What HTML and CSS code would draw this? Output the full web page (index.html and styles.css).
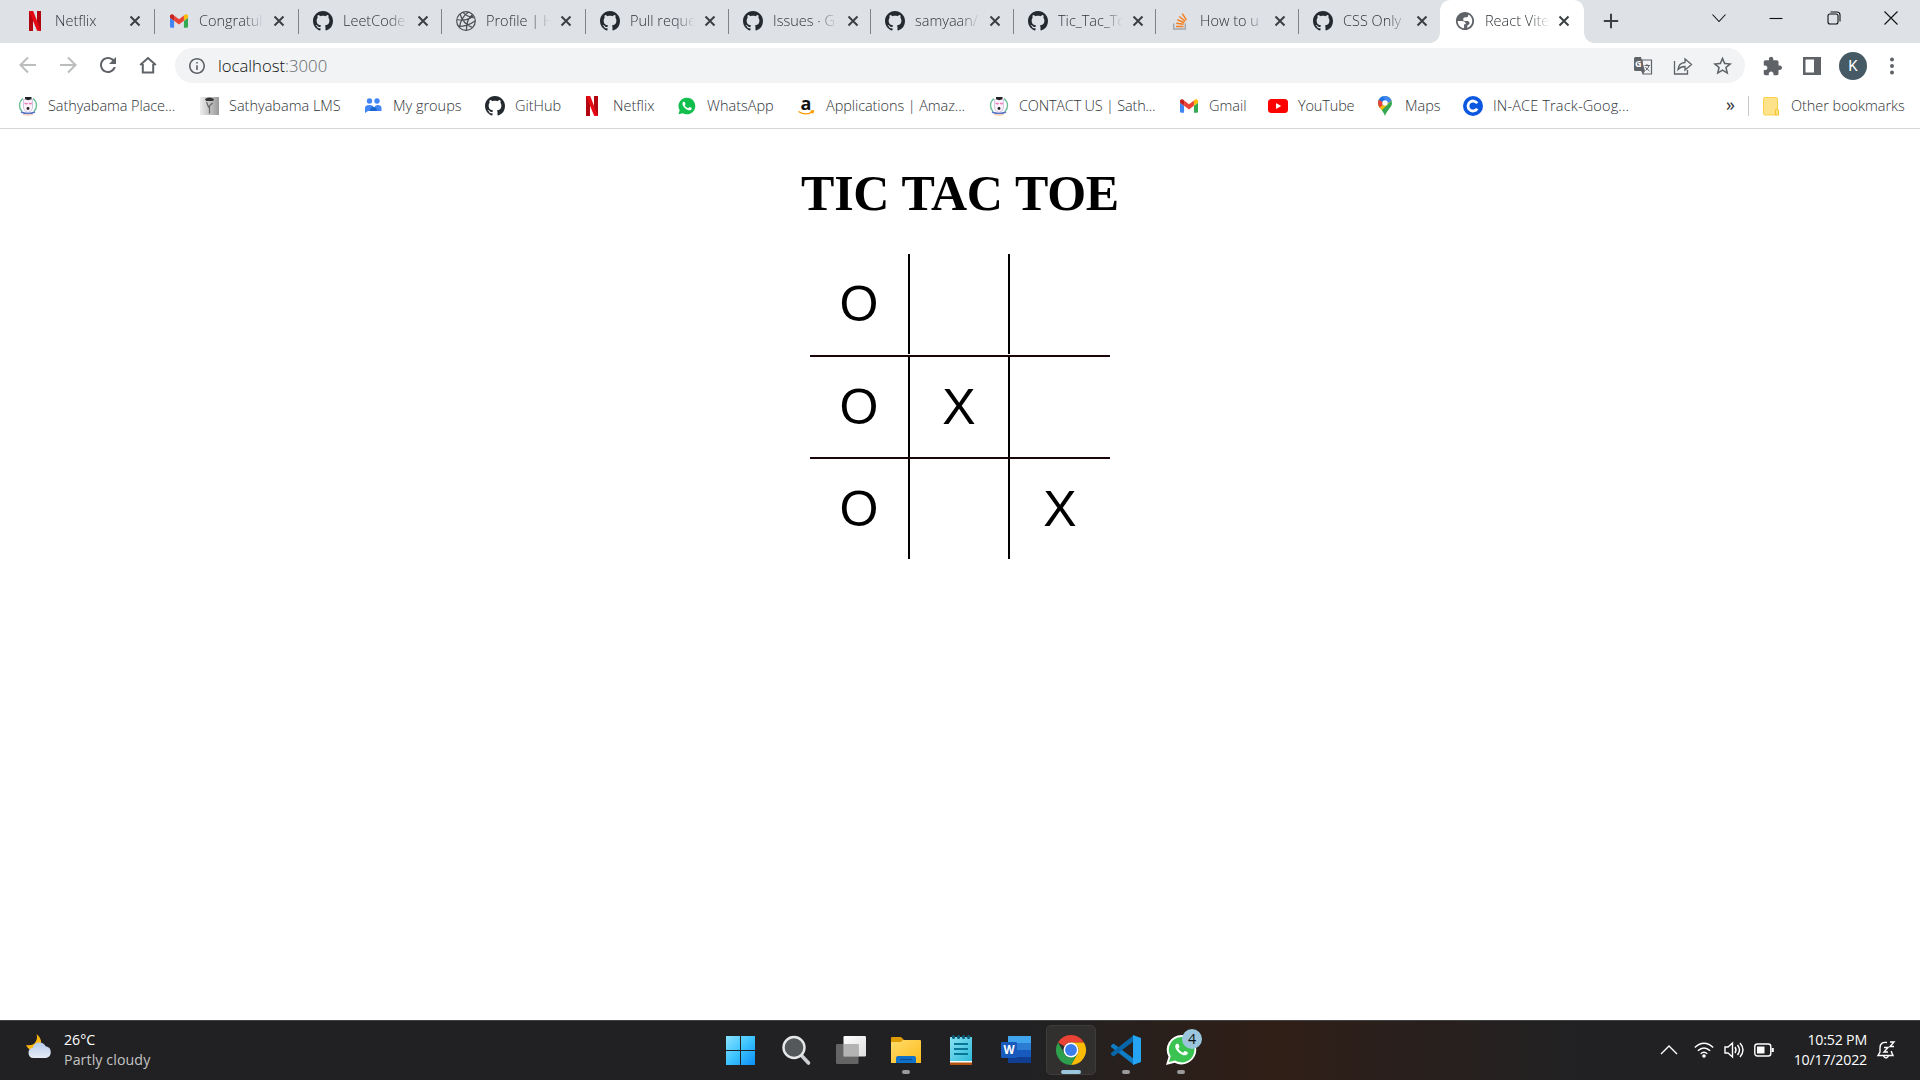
FILE: index.html
```html
<!DOCTYPE html>
<html lang="en">
<head>
<meta charset="utf-8">
<title>React Vite</title>
<link rel="stylesheet" href="styles.css">
</head>
<body>
<svg class="sprite" aria-hidden="true">
  <symbol id="github" viewBox="0 0 16 16"><path fill="#24292f" d="M8 0C3.58 0 0 3.58 0 8c0 3.54 2.29 6.53 5.47 7.59.4.07.55-.17.55-.38 0-.19-.01-.82-.01-1.49-2.01.37-2.53-.49-2.69-.94-.09-.23-.48-.94-.82-1.13-.28-.15-.68-.52-.01-.53.63-.01 1.08.58 1.23.82.72 1.21 1.87.87 2.33.66.07-.52.28-.87.51-1.07-1.78-.2-3.64-.89-3.64-3.95 0-.87.31-1.59.82-2.15-.08-.2-.36-1.02.08-2.12 0 0 .67-.21 2.2.82.64-.18 1.32-.27 2-.27s1.36.09 2 .27c1.53-1.04 2.2-.82 2.2-.82.44 1.1.16 1.92.08 2.12.51.56.82 1.27.82 2.15 0 3.07-1.87 3.75-3.65 3.95.29.25.54.73.54 1.48 0 1.07-.01 1.93-.01 2.2 0 .21.15.46.55.38A8.01 8.01 0 0 0 16 8c0-4.42-3.58-8-8-8z"/></symbol>
  <symbol id="netflix" viewBox="0 0 20 20"><path fill="#b20710" d="M3 0h4v20l-4 .2zM11 0h4v20l-4-.4z"/><path fill="#e50914" d="M3 0h4.2L15 20l-4-.4z"/></symbol>
  <symbol id="gmail" viewBox="52 42 88 66"><path fill="#4285f4" d="M58 108h14V74L52 59v43c0 3.32 2.69 6 6 6"/><path fill="#34a853" d="M120 108h14c3.32 0 6-2.69 6-6V59l-20 15"/><path fill="#fbbc04" d="M120 48v26l20-15v-8c0-7.42-8.47-11.65-14.4-7.2"/><path fill="#ea4335" d="M72 74V48l24 18 24-18v26L96 92"/><path fill="#c5221f" d="M52 51v8l20 15V48l-5.6-4.2c-5.94-4.45-14.4-.22-14.4 7.2"/></symbol>
  <symbol id="crest" viewBox="0 0 20 20"><path d="M5 2.500C.5 6 .5 12 4 15.500M15 2.500c4.500 3.500 4.500 9.500 1 13" fill="none" stroke="#6cbd97" stroke-width="1.400"/><path d="M5.500 3.500h9v8.500q0 3-4.500 4.500-4.500-1.500-4.500-4.500z" fill="#faf1fa" stroke="#c3bddb" stroke-width=".8"/><path d="M7 1h6.500v2l-3.300 1.200L7 3z" fill="#222"/><path d="M6.500 7l2 1 1-1M11 7l1.500 1 1.500-1" fill="none" stroke="#f27ab8" stroke-width="1.200"/><circle cx="10" cy="12.500" r="1.400" fill="#222"/><path d="M3 16q7 3 14 0" fill="none" stroke="#5572c4" stroke-width="1.400"/><path d="M5 18.500q5 1.500 10 0" fill="none" stroke="#f6c49a"/></symbol>
  <symbol id="phone" viewBox="0 0 24 24"><path fill="#fff" d="M17.472 14.382c-.297-.149-1.758-.867-2.03-.967-.273-.099-.471-.148-.67.15-.197.297-.767.966-.94 1.164-.173.199-.347.223-.644.075-.297-.15-1.255-.463-2.39-1.475-.883-.788-1.48-1.761-1.653-2.059-.173-.297-.018-.458.13-.606.134-.133.298-.347.446-.52.149-.174.198-.298.298-.497.099-.198.05-.371-.025-.52-.075-.149-.669-1.612-.916-2.207-.242-.579-.487-.5-.669-.51-.173-.008-.371-.01-.57-.01-.198 0-.52.074-.792.372-.272.297-1.04 1.016-1.04 2.479 0 1.462 1.065 2.875 1.213 3.074.149.198 2.096 3.2 5.077 4.487.709.306 1.262.489 1.694.625.712.227 1.36.195 1.871.118.571-.085 1.758-.719 2.006-1.413.248-.694.248-1.289.173-1.413-.074-.124-.272-.198-.57-.347"/></symbol>
  <symbol id="close" viewBox="0 0 12 12"><path d="M1.500 1.500l9 9M10.500 1.500l-9 9" stroke="#3c4043" stroke-width="2" fill="none"/></symbol>
</svg>

<header class="browser">
  <div class="tabstrip">
    <div class="tab tab-first"><svg class="fav"><use href="#netflix"/></svg><span class="tab-title">Netflix</span><svg class="tab-close"><use href="#close"/></svg></div>
    <div class="tab tab-wide"><svg class="fav fav-gmail"><use href="#gmail"/></svg><span class="tab-title">Congratul</span><svg class="tab-close"><use href="#close"/></svg></div>
    <div class="tab"><svg class="fav"><use href="#github"/></svg><span class="tab-title">LeetCode-</span><svg class="tab-close"><use href="#close"/></svg></div>
    <div class="tab tab-wide"><svg class="fav" viewBox="0 0 20 20" fill="none" stroke="#4a4d51" stroke-width="1.200"><circle cx="10" cy="10" r="9.300"/><path d="M12.500 1Q4.500 7 3.500 16.500M16.500 3.500Q10 9 10.500 19M4 3q3 10 12.500 13.500M1 8.500q9 2.500 16-3.500M2.500 15.500q9 0 16.500-5.500M7 1.400Q11 6 18.500 7"/></svg><span class="tab-title">Profile | H</span><svg class="tab-close"><use href="#close"/></svg></div>
    <div class="tab"><svg class="fav"><use href="#github"/></svg><span class="tab-title">Pull reque</span><svg class="tab-close"><use href="#close"/></svg></div>
    <div class="tab tab-narrow"><svg class="fav"><use href="#github"/></svg><span class="tab-title">Issues · G</span><svg class="tab-close"><use href="#close"/></svg></div>
    <div class="tab"><svg class="fav"><use href="#github"/></svg><span class="tab-title">samyaan/</span><svg class="tab-close"><use href="#close"/></svg></div>
    <div class="tab tab-narrow"><svg class="fav"><use href="#github"/></svg><span class="tab-title">Tic_Tac_To</span><svg class="tab-close"><use href="#close"/></svg></div>
    <div class="tab"><svg class="fav" viewBox="0 0 20 20" fill="none"><path d="M3.700 12.500V18h11.600v-5.500" stroke="#a5a8ab" stroke-width="1.500"/><path d="M6 15.500h7.500M6.200 12.300l7.400 1M7.300 8.700l7 3M9.300 5.500l6 4.800M12.300 2.700l4.200 6.500" stroke="#f48024" stroke-width="1.500"/></svg><span class="tab-title">How to u</span><svg class="tab-close"><use href="#close"/></svg></div>
    <div class="tab tab-last"><svg class="fav"><use href="#github"/></svg><span class="tab-title">CSS Only</span><svg class="tab-close"><use href="#close"/></svg></div>
    <div class="tab tab-active"><svg class="fav" viewBox="1 1 22 22" fill="#5f6368"><path d="M12 2C6.480 2 2 6.480 2 12s4.480 10 10 10 10-4.480 10-10S17.520 2 12 2zM4 12h4.500c3 0 4.500 1.500 4.500 3.500h-2v4.400C7 19.500 4 16.500 4 12zm10.500 7.600v-2c0-1.500 2.500-1 2.500-3s-1.500-2.600-3-2.600h-2c-1.500 0-2-1-2-2s1-2 2.500-2H14c1 0 1.500-1 1.500-2.200V4.900C18.200 6.200 20 8.900 20 12c0 3.500-2.300 6.500-5.500 7.600z"/></svg><span class="tab-title">React Vite</span><svg class="tab-close"><use href="#close"/></svg></div>
    <svg class="new-tab" viewBox="0 0 16 16"><path d="M8 .8v14.400M.8 8h14.400" stroke="#3c4043" stroke-width="2"/></svg>
    <div class="window-controls">
      <svg viewBox="0 0 14 14"><path d="M.5 3.500l6.500 7 6.500-7"/></svg>
      <svg viewBox="0 0 14 14"><path d="M.5 7.500h13"/></svg>
      <svg viewBox="0 0 14 14"><rect x="1" y="3" width="10" height="10" rx="2"/><path d="M3.500 1H10q3 0 3 3v6.500"/></svg>
      <svg viewBox="0 0 14 14"><path d="M.5 .5l13 13M13.500 .5l-13 13"/></svg>
    </div>
  </div>

  <div class="toolbar">
    <svg class="nav off" viewBox="0 0 20 20"><path d="M18 10H3M10 2.500L2.500 10l7.500 7.500"/></svg>
    <svg class="nav off" viewBox="0 0 20 20"><path d="M2 10h15M10 2.500l7.500 7.500-7.500 7.500"/></svg>
    <svg class="nav solid" viewBox="2 2 20 20"><path d="M17.650 6.350C16.200 4.900 14.210 4 12 4c-4.420 0-7.990 3.580-7.990 8s3.570 8 7.990 8c3.730 0 6.840-2.550 7.730-6h-2.080c-.82 2.330-3.040 4-5.650 4-3.310 0-6-2.690-6-6s2.690-6 6-6c1.660 0 3.140.69 4.220 1.780L13 11h7V4l-2.350 2.350z"/></svg>
    <svg class="nav" viewBox="0 0 20 20"><path d="M2.200 10L10 3l7.800 7M4.800 9v8.500h10.400V9"/></svg>
    <div class="omnibox">
      <svg class="info" viewBox="2 2 20 20"><path d="M11 7h2v2h-2zm0 4h2v6h-2zm1-9C6.480 2 2 6.480 2 12s4.480 10 10 10 10-4.480 10-10S17.520 2 12 2zm0 18c-4.410 0-8-3.590-8-8s3.590-8 8-8 8 3.590 8 8-3.590 8-8 8z"/></svg>
      <span class="url">localhost<span class="port">:3000</span></span>
      <div class="omni-actions">
        <svg viewBox="0 0 20 20"><path d="M9 4h9.500v14H10z" fill="none" stroke="#5f6368" stroke-width="1.200"/><path fill="#5f6368" d="M2.500 1H8l4 14H2.500Q1 15 1 13.500v-11Q1 1 2.500 1z"/><text x="2" y="11" class="g-letter">G</text><path d="M11.500 9.500H17M14 8v1.500M16 9.500q-.5 3-3.500 5M12.500 11q1.500 2.500 4 4" fill="none" stroke="#5f6368"/><path fill="#5f6368" d="M8 15h4l-2 3z"/></svg>
        <svg viewBox="0 0 20 20" fill="none" stroke="#5f6368" stroke-width="1.300"><path d="M1.500 5v13h13v-4"/><path d="M5 13.500q.5-6.500 7-7V3l6.500 5.500-6.500 5.500v-3.500q-4.500 0-7 3z"/></svg>
        <svg viewBox="2 2 20 20"><path fill="#5f6368" d="M22 9.240l-7.190-.62L12 2 9.190 8.630 2 9.240l5.460 4.730L5.820 21 12 17.270 18.180 21l-1.630-7.030L22 9.240zM12 15.400l-3.760 2.270 1-4.280-3.320-2.880 4.380-.38L12 6.100l1.710 4.040 4.380.38-3.320 2.880 1 4.280L12 15.400z"/></svg>
      </div>
    </div>
    <div class="extensions">
      <svg viewBox="0 0 23 23"><path fill="#5f6368" d="M20.500 11H19V7c0-1.100-.9-2-2-2h-4V3.500C13 2.120 11.880 1 10.500 1S8 2.120 8 3.500V5H4c-1.100 0-1.990.9-1.990 2v3.800H3.500c1.490 0 2.700 1.210 2.700 2.700s-1.210 2.700-2.700 2.700H2V20c0 1.100.9 2 2 2h3.800v-1.500c0-1.490 1.210-2.700 2.700-2.700s2.700 1.210 2.700 2.700V22H17c1.100 0 2-.9 2-2v-4h1.500c1.380 0 2.500-1.120 2.500-2.500S21.880 11 20.500 11z"/></svg>
      <svg viewBox="0 0 20 20"><path fill="#5f6368" fill-rule="evenodd" d="M1 1h18v18H1zM3.500 3.500v13H12v-13z"/></svg>
      <span class="avatar">K</span>
      <svg viewBox="0 0 20 20" fill="#5f6368"><circle cx="10" cy="3.500" r="2"/><circle cx="10" cy="10" r="2"/><circle cx="10" cy="16.500" r="2"/></svg>
    </div>
  </div>

  <nav class="bookmarks">
    <a class="bm bm-place"><svg><use href="#crest"/></svg><span>Sathyabama Place...</span></a>
    <a class="bm bm-lms"><svg viewBox="0 0 20 20"><defs><linearGradient id="lms"><stop stop-color="#eee"/><stop offset="1" stop-color="#999"/></linearGradient></defs><path fill="url(#lms)" d="M1 1h19v18H1z"/><path fill="#333" d="M6 3q4-3 9 0l-1 2H7z"/><path d="M7.500 6l2 5 4-4M10.500 10v7.500" stroke="#666" stroke-width="1.200" fill="none"/></svg><span>Sathyabama LMS</span></a>
    <a class="bm bm-groups"><svg viewBox="0 0 20 20" fill="#4285f4"><circle cx="6.500" cy="5" r="2.700"/><circle cx="14" cy="5" r="2.700"/><path d="M2 17v-5q0-3 4.500-3t4 3v3H5zM11.500 15v-4q1-2 3-2 4 0 4 3v3z"/><path fill="#1967d2" d="M7 15q0-4 3.500-4t3.500 4z"/></svg><span>My groups</span></a>
    <a class="bm bm-github"><svg><use href="#github"/></svg><span>GitHub</span></a>
    <a class="bm bm-netflix"><svg><use href="#netflix"/></svg><span>Netflix</span></a>
    <a class="bm bm-whatsapp"><svg viewBox="0 0 24 24"><path fill="#12bf4c" d="M12 2a10 10 0 1 1-5 18.700L1.800 22l1.400-5A10 10 0 0 1 12 2z"/><use href="#phone" x="1" y="1" width="22" height="22"/></svg><span>WhatsApp</span></a>
    <a class="bm bm-amazon"><svg viewBox="0 0 20 20"><text x="4.500" y="14" class="a-letter">a</text><path d="M2.500 15.500q7 4.500 14 .5M14.500 15h3l-1 2.500" fill="none" stroke="#f90" stroke-width="1.400"/></svg><span>Applications | Amaz...</span></a>
    <a class="bm bm-contact"><svg><use href="#crest"/></svg><span>CONTACT US | Sath...</span></a>
    <a class="bm bm-gmail"><svg><use href="#gmail" x="1" y="1" width="18" height="18"/></svg><span>Gmail</span></a>
    <a class="bm bm-youtube"><svg viewBox="0 0 20 20"><rect y="3" width="20" height="14" rx="3.500" fill="#f00"/><path fill="#fff" d="M8 7l5.200 3L8 13z"/></svg><span>YouTube</span></a>
    <a class="bm bm-maps"><svg viewBox="0 0 20 20"><clipPath id="pin"><path d="M10 0a7 7 0 0 1 7 7c0 4.500-4.500 6-7 13-2.500-7-7-8.500-7-13a7 7 0 0 1 7-7z"/></clipPath><g clip-path="url(#pin)"><path fill="#34a853" d="M0 0h20v20H0z"/><path fill="#fbbc04" d="M3 12L15 1l2 3-11 11z"/><path fill="#4285f4" d="M5 0h13v4L8 10z"/><path fill="#1a73e8" d="M0 0h7l4 5-5 5z"/><path fill="#ea4335" d="M3 3l6 4-5 6-2-4z"/></g><circle cx="10" cy="7" r="2.700" fill="#fff"/></svg><span>Maps</span></a>
    <a class="bm bm-inace"><svg viewBox="0 0 20 20"><circle cx="10" cy="10" r="10" fill="#0b57e0"/><path d="M14.200 7.300a5 5 0 1 0 0 5.400" fill="none" stroke="#fff" stroke-width="2.800"/></svg><span>IN-ACE Track-Goog...</span></a>
    <span class="overflow">»</span>
    <a class="bm bm-other"><svg viewBox="0 0 20 20"><rect x="2.500" y="1.500" width="14" height="17.500" rx="1.500" fill="#ffe38a" stroke="#fbd04f"/><path d="M14.500 19v-4q0-2 1.500-2t1.500 2v4z" fill="#ffe38a" stroke="#f3c22f"/></svg><span>Other bookmarks</span></a>
  </nav>
</header>

<main class="game">
  <h1>TIC TAC TOE</h1>
  <div class="board">
    <div class="row row-first"><div class="cell">O</div><div class="cell"></div><div class="cell"></div></div>
    <div class="row"><div class="cell">O</div><div class="cell">X</div><div class="cell"></div></div>
    <div class="row"><div class="cell">O</div><div class="cell"></div><div class="cell">X</div></div>
  </div>
</main>

<footer class="taskbar">
  <div class="weather">
    <svg viewBox="0 0 28 28"><defs><linearGradient id="cloud" x2="0" y2="1"><stop stop-color="#b5caeb"/><stop offset="1" stop-color="#e6ecf5"/></linearGradient></defs><path fill="#fbb612" d="M11.500 0q5 4 4.500 9t-5 7Q4 18 1 11q7 1 9.500-3t1-8z"/><path fill="url(#cloud)" d="M8.500 24a5.200 5.200 0 0 1-.8-10.300 7 7 0 0 1 13-1.500A6 6 0 0 1 21 24z"/></svg>
    <div class="weather-text"><span>26°C</span><span class="sub">Partly cloudy</span></div>
  </div>
  <div class="apps">
    <div class="app"><svg viewBox="0 0 30 30"><defs><linearGradient id="win" x2="1" y2="1"><stop stop-color="#8be3ff"/><stop offset=".5" stop-color="#3cc3ff"/><stop offset="1" stop-color="#0a8ff5"/></linearGradient></defs><path fill="url(#win)" d="M0 1h14v14H0zM15 1h14v14H15zM0 16h14v14H0zM15 16h14v14H15z"/></svg></div>
    <div class="app"><svg viewBox="0 0 30 30"><path d="M20.500 20.500l7 7.500" stroke="#ccd0d4" stroke-width="3.600" stroke-linecap="round"/><circle cx="13" cy="12.500" r="10.500" fill="#55585a" stroke="#e5e7e8" stroke-width="2.400"/></svg></div>
    <div class="app"><svg viewBox="0 0 30 30"><defs><linearGradient id="tv" x2="1" y2="1"><stop stop-color="#fff"/><stop offset="1" stop-color="#ddd"/></linearGradient></defs><rect x="7.500" y="1" width="22.500" height="20.500" rx="1.200" fill="url(#tv)"/><rect y="9" width="22.500" height="20" rx="1.200" fill="#777" fill-opacity=".78"/><path fill="#b3b3b3" d="M7.500 9h15v12.500h-15z"/></svg></div>
    <div class="app"><svg viewBox="0 0 30 30"><defs><linearGradient id="fold" x2="1" y2="1"><stop stop-color="#ffdc6b"/><stop offset="1" stop-color="#fdbb1c"/></linearGradient></defs><path fill="#dd9b05" d="M0 3q0-1 1-1h9l3 3v5H0z"/><path fill="url(#fold)" d="M0 7h10l2-2h17q1 0 1 1v22H0z"/><path fill="#0f71c9" d="M5 28v-5q0-2 2-2h16q2 0 2 2v5z"/><path d="M9 24.500h12" stroke="#0a4b91" stroke-width="1.200"/></svg><i class="run"></i></div>
    <div class="app"><svg viewBox="0 0 30 30"><defs><linearGradient id="note" x2="1" y2="1"><stop stop-color="#8be2f2"/><stop offset="1" stop-color="#2ebadb"/></linearGradient></defs><path fill="#b35211" d="M4 26h22v4H4z"/><path fill="#fff" d="M4 24h22v3.500H4z"/><path fill="url(#note)" d="M4 2h22v24H4z"/><g fill="#075f7c"><rect x="6" width="3" height="4" rx="1.500"/><rect x="11" width="3" height="4" rx="1.500"/><rect x="16" width="3" height="4" rx="1.500"/><rect x="21" width="3" height="4" rx="1.500"/></g><path d="M8 9h14M8 14h14M8 19h14" stroke="#087696" stroke-width="2"/></svg></div>
    <div class="app"><svg viewBox="0 0 30 30"><path fill="#41a5ee" d="M7 1h23v7H7z"/><path fill="#2b7cd3" d="M7 8h23v7H7z"/><path fill="#185abd" d="M7 15h23v7H7z"/><path fill="#103f91" d="M7 22h23v6H7z"/><rect x="0" y="7" width="16" height="16" rx="1.300" fill="#185abd"/><text x="2.500" y="19" class="w-letter">W</text></svg></div>
    <div class="app app-active"><svg viewBox="0 0 48 48"><path fill="#ea4335" d="M24 0a24 24 0 0 1 20.800 12H24a12 12 0 0 0-10.400 6L3.200 12A24 24 0 0 1 24 0z"/><path fill="#fbbc05" d="M44.800 12A24 24 0 0 1 24 48l10.400-18A12 12 0 0 0 34.400 18L24 12z"/><path fill="#2e9f4d" d="M3.200 12l10.400 18A12 12 0 0 0 24 36l10.400-6L24 48A24 24 0 0 1 3.200 12z"/><circle cx="24" cy="24" r="12" fill="#fff"/><circle cx="24" cy="24" r="9.500" fill="#3b7ded"/></svg><i class="run"></i></div>
    <div class="app"><svg viewBox="0 0 30 30"><path fill="#0f7dc5" d="M0 10.500L2.500 8.500 23 24v6L0 12z"/><path fill="#0767a9" d="M0 19.500l2.500 2L23 6V0L0 18z"/><path fill="#24a4f2" d="M22 0l8 3v24l-8 3z"/></svg><i class="run"></i></div>
    <div class="app"><svg viewBox="0 0 30 30"><path fill="#fff" d="M15.500 0a14.700 14.700 0 1 1-6.800 27.700L0 30l2.500-8.300A14.700 14.700 0 0 1 15.500 0z"/><path fill="#3ac351" d="M15.500 2a12.700 12.700 0 1 1-6.400 23.500L3 27l1.700-5.800A12.700 12.700 0 0 1 15.500 2z"/><use href="#phone" x="3" y="2" width="25" height="25"/></svg><span class="badge">4</span><i class="run"></i></div>
  </div>
  <div class="tray">
    <svg class="chev" viewBox="0 0 20 20"><path d="M2 14l8-8 8 8"/></svg>
    <svg viewBox="0 0 20 20"><path d="M.8 7.500q9.200-8.500 18.400 0M3.800 10.700q6.200-5.500 12.400 0M6.700 13.700q3.300-2.800 6.600 0"/><circle cx="10" cy="16" r="1.800" class="dot"/></svg>
    <svg viewBox="0 0 20 20"><path d="M1 7h3l4.500-4v14L4 13H1zM11 7q2 3 0 6M13.500 5q4 5 0 10M16 3q6 7 0 14"/></svg>
    <svg viewBox="0 0 20 20"><rect x=".8" y="4" width="16" height="12" rx="2.500"/><path class="dot" d="M3 6.500h7.500v7H3z"/><path d="M18.700 8v4" stroke-width="2.200"/></svg>
    <div class="clock"><span>10:52 PM</span><span class="date">10/17/2022</span></div>
    <svg class="bell" viewBox="0 0 20 20"><path d="M11 2.500Q4 1.500 4 8v4l-2 3.500h15L15.500 12v-1M7.500 16q2.500 4 5 0M8 7.500h4L8 12h4M14 2h4l-4 4.500h4"/></svg>
  </div>
</footer>
</body>
</html>
```
FILE: styles.css
```css
* { box-sizing: border-box; }

body {
  margin: 0;
  height: 1080px;
  display: flex;
  flex-direction: column;
  overflow: hidden;
  background: #fff;
  font-family: "Open Sans", "Noto Sans", sans-serif;
  font-size: 14.5px;
  font-weight: 350;
  color: #303438;
}

svg { display: block; flex: none; overflow: visible; }
.sprite { position: absolute; width: 0; height: 0; }

/* Browser frame */
.browser { height: 129px; border-bottom: 1px solid #d5d7da; flex: none; }

.tabstrip {
  display: flex;
  height: 43px;
  padding-left: 12px;
  background: #dee1e6;
}
.tab {
  position: relative;
  display: flex;
  align-items: center;
  width: 143px;
  flex: none;
  padding: 0 0 1px 14px;
}
.tab::after {
  content: "";
  position: absolute;
  right: 0;
  top: 9px;
  width: 1px;
  height: 25px;
  background: #808387;
}
.tab-wide { width: 144px; }
.tab-narrow { width: 142px; }
.tab-last { width: 141px; }
.tab-last::after { display: none; }
.fav { width: 20px; height: 20px; }
.fav-gmail { width: 18px; margin: 0 1px; }
.tab-title {
  width: 65px;
  margin: 0 9px 0 10px;
  padding-bottom: 2px;
  white-space: nowrap;
  -webkit-mask-image: linear-gradient(to right, #000 45px, transparent 65px);
  mask-image: linear-gradient(to right, #000 45px, transparent 65px);
}
.tab-close { width: 12px; height: 12px; }
.tab-first .tab-title { margin: 0 9px 0 9px; }
.tab-last .tab-title,
.tab-active .tab-title { margin-right: 8px; }

.tab-active {
  width: 144px;
  padding-left: 15px;
  background: #fff;
  border-radius: 10px 10px 0 0;
}
.tab-active::before,
.tab-active::after {
  content: "";
  position: absolute;
  top: auto;
  bottom: 0;
  width: 10px;
  height: 10px;
}
.tab-active::before { left: -10px; background: radial-gradient(circle at 0 0, #dee1e6 9.500px, #fff 10px); }
.tab-active::after { right: -10px; background: radial-gradient(circle at 100% 0, #dee1e6 9.500px, #fff 10px); }

.new-tab { width: 16px; height: 16px; margin: 13px 0 0 19px; }
.window-controls { display: flex; gap: 43.500px; margin: 11px 22px 0 auto; }
.window-controls svg { width: 14px; height: 14px; fill: none; stroke: #111; stroke-width: 1.100; }

.toolbar {
  display: flex;
  align-items: center;
  height: 45px;
  padding-left: 18px;
}
.nav { width: 20px; height: 20px; margin: 0 20px 1px 0; fill: none; stroke: #5f6368; stroke-width: 2; }
.nav.off { stroke: #babcbe; }
.nav.solid { fill: #5f6368; stroke: none; }
.omnibox {
  display: flex;
  align-items: center;
  width: 1570px;
  height: 35px;
  margin-left: -3px;
  padding: 0 13px 0 14px;
  border-radius: 18px;
  background: #f1f3f4;
}
.info { width: 16px; height: 16px; fill: #5f6368; }
.url { margin-left: 13px; font-size: 16.700px; color: #111; }
.port { color: #62666b; }
.omni-actions { display: flex; gap: 20px; margin-left: auto; }
.omni-actions svg { width: 20px; height: 20px; }
.omni-actions svg:last-child { width: 19px; }
.g-letter { font: bold 9px "Open Sans", sans-serif; fill: #fff; }
.extensions { display: flex; align-items: center; margin-left: 17px; }
.extensions svg { width: 20px; height: 20px; }
.extensions svg + svg { margin-left: 20px; }
.avatar {
  width: 28px;
  height: 28px;
  margin: 0 15px 0 17px;
  border-radius: 50%;
  background: #455a64;
  color: #fff;
  font: 15px/28px Roboto, sans-serif;
  text-align: center;
}

.bookmarks { display: flex; align-items: center; height: 36px; padding-left: 18px; }
.bm { display: flex; align-items: center; gap: 10px; white-space: nowrap; flex: none; }
.bm svg { width: 20px; height: 20px; }
.bm span { padding-bottom: 2px; }
.bm-place { width: 181px; letter-spacing: -0.080px; }
.bm-lms { width: 164px; }
.bm-groups { width: 122px; }
.bm-github { width: 98px; }
.bm-netflix { width: 94px; }
.bm-whatsapp { width: 119px; }
.bm-amazon { width: 193px; letter-spacing: -0.080px; }
.bm-contact { width: 190px; letter-spacing: -0.200px; }
.bm-gmail { width: 89px; }
.bm-youtube { width: 107px; letter-spacing: -0.150px; }
.bm-maps { width: 88px; }
.bm-inace { width: 170px; letter-spacing: 0.150px; }
.a-letter { font: bold 18px "Open Sans", sans-serif; fill: #111; }
.overflow { margin-left: auto; font-size: 18px; font-weight: 400; line-height: 20px; padding-bottom: 4px; }
.bm-other { width: 172px; height: 20px; margin-left: 13px; padding-left: 12px; border-left: 1px solid #c6c8cb; letter-spacing: -0.050px; }

/* Game */
.game { flex: 1; display: flex; flex-direction: column; align-items: center; font-weight: 400; }
h1 {
  margin: 36px 0 32px;
  font: bold 50px/57px "Liberation Serif", serif;
  letter-spacing: -0.250px;
  word-spacing: 1px;
  color: #000;
}
.board { width: 300px; font: 50px "Liberation Sans", sans-serif; color: #000; }
.row { display: flex; border-bottom: 2px solid #1a0509; }
.row:last-child { border-bottom: 0; }
.row-first { padding-bottom: 1px; }
.cell {
  display: flex;
  align-items: center;
  justify-content: center;
  width: 100px;
  height: 100px;
  border-right: 2px solid #000;
}
.cell:last-child { border-right: 0; }

/* Taskbar */
.taskbar {
  display: grid;
  grid-template-columns: 713px 495px 1fr;
  height: 60px;
  flex: none;
  border-top: 1px solid #414345;
  background: linear-gradient(to right, #212123 0, #212123 1030px, #2c1f19 1200px, #301f17 1280px, #2a1f1c 1390px, #212123 1580px);
  color: #fff;
  font-size: 14.200px;
  font-weight: 400;
}
.weather { display: flex; align-items: center; padding-left: 25px; }
.weather svg { width: 28px; height: 28px; margin-bottom: 6px; }
.weather-text { display: flex; flex-direction: column; margin-left: 11px; line-height: 20px; padding-bottom: 1px; }
.sub { color: #c4c4c4; letter-spacing: 0.100px; }
.apps { display: flex; }
.app { position: relative; display: flex; align-items: center; justify-content: center; width: 55px; height: 58px; }
.app svg { width: 30px; height: 30px; }
.app-active::before {
  content: "";
  position: absolute;
  inset: 4px 2px 4px 3px;
  border: 1px solid #403c3b;
  border-radius: 5px;
  background: #322f2f;
}
.app-active svg { position: relative; }
.run { position: absolute; left: 24px; bottom: 5px; width: 8px; height: 4px; border-radius: 2px; background: #9a9a9a; }
.app-active .run { left: 18px; width: 20px; background: #9ac5dc; }
.w-letter { font: bold 11.500px "Open Sans", sans-serif; fill: #fff; }
.badge {
  position: absolute;
  left: 29px;
  top: 8px;
  width: 20px;
  height: 20px;
  border-radius: 50%;
  background: #9ac5dc;
  color: #111;
  line-height: 20px;
  text-align: center;
}
.tray { display: flex; align-items: center; justify-content: flex-end; padding-right: 24px; }
.tray svg { width: 20px; height: 20px; margin: 0 10px 1px 0; fill: none; stroke: #fff; stroke-width: 1.400; }
.tray .chev { margin-right: 15px; }
.tray .dot { fill: #fff; stroke: none; }
.clock { display: flex; flex-direction: column; align-items: flex-end; width: 83px; line-height: 20px; padding-bottom: 1px; letter-spacing: -0.200px; }
.tray .bell { margin-left: 9px; margin-right: 0; }
```
